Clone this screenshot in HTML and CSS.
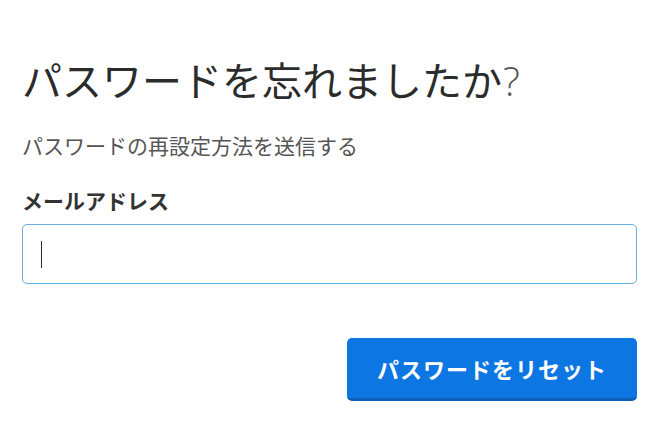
FILE: index.html
```html
<!DOCTYPE html>
<html lang="ja">
<head>
<meta charset="utf-8">
<link rel="stylesheet" href="styles.css">
</head>
<body>
<main class="page">
  <h1 class="title">パスワードを忘れましたか<span class="q">?</span></h1>
  <p class="lead">パスワードの再設定方法を送信する</p>
  <label class="label" for="email">メールアドレス</label>
  <div class="field"><span class="caret"></span></div>
  <div class="actions">
    <button class="btn" type="button">パスワードをリセット</button>
  </div>
</main>
</body>
</html>
```

FILE: styles.css
```css
html, body {
  margin: 0;
  padding: 0;
  background: #fff;
}
.page {
  font-family: "Noto Sans CJK JP", "Noto Sans", sans-serif;
  color: #333;
  padding: 53px 30px 0 22px;
  display: flex;
  flex-direction: column;
}
.title {
  margin: 0;
  font-size: 40px;
  font-weight: 400;
  line-height: 52px;
  color: #2b2b2b;
}
.q {
  font-family: "Open Sans", sans-serif;
  font-weight: 300;
  color: #555;
  font-size: 40px;
  margin-left: 1px;
}
.lead {
  margin: 24px 0 0;
  font-size: 21px;
  line-height: 28px;
  color: #555;
}
.label {
  margin-top: 27px;
  font-size: 21px;
  font-weight: 700;
  line-height: 28px;
  color: #333;
}
.field {
  margin-top: 10px;
  height: 58px;
  border: 1px solid #66aee6;
  border-radius: 5px;
  display: flex;
  align-items: center;
  padding-left: 18px;
}
.caret {
  width: 1px;
  height: 27px;
  background: #1e3048;
}
.actions {
  display: flex;
  justify-content: flex-end;
  margin-top: 54px;
}
.btn {
  width: 290px;
  height: 63px;
  border: none;
  border-bottom: 3px solid #0a5fb8;
  border-radius: 5px;
  background: #0c76e2;
  color: #fff;
  font-family: "Noto Sans CJK JP", sans-serif;
  font-weight: 700;
  font-size: 22px;
  letter-spacing: 1px;
  padding: 0;
}
```
